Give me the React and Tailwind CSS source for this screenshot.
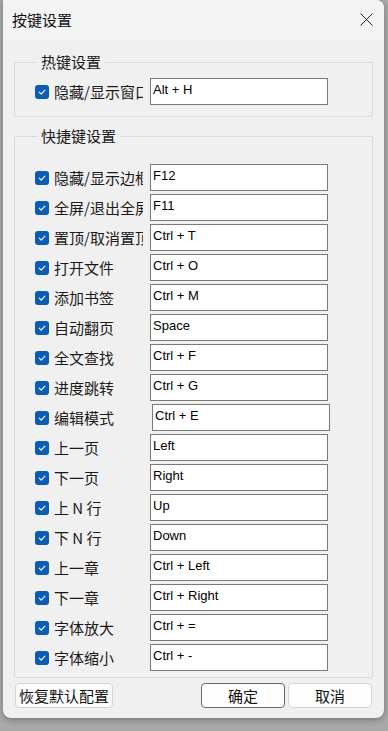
const HOTKEYS = [{ label: '隐藏/显示窗口', value: 'Alt + H' }];

const SHORTCUTS = [
    { label: '隐藏/显示边框', value: 'F12' },
    { label: '全屏/退出全屏', value: 'F11' },
    { label: '置顶/取消置顶', value: 'Ctrl + T' },
    { label: '打开文件', value: 'Ctrl + O' },
    { label: '添加书签', value: 'Ctrl + M' },
    { label: '自动翻页', value: 'Space' },
    { label: '全文查找', value: 'Ctrl + F' },
    { label: '进度跳转', value: 'Ctrl + G' },
    { label: '编辑模式', value: 'Ctrl + E', shifted: true },
    { label: '上一页', value: 'Left' },
    { label: '下一页', value: 'Right' },
    { label: '上 N 行', value: 'Up' },
    { label: '下 N 行', value: 'Down' },
    { label: '上一章', value: 'Ctrl + Left' },
    { label: '下一章', value: 'Ctrl + Right' },
    { label: '字体放大', value: 'Ctrl + =' },
    { label: '字体缩小', value: 'Ctrl + -' },
];

const CJK = "font-['Noto_Sans_CJK_SC',sans-serif]";

const Check = () => (
    <span className="flex h-[14px] w-[14px] shrink-0 items-center justify-center rounded-[3px] bg-[#0b5cb5]">
        <svg width="10" height="10" viewBox="0 0 10 10" fill="none">
            <path d="M2.2 5.2 L4.2 7.1 L7.9 3.1" stroke="white" strokeWidth="1.1" strokeLinecap="round" strokeLinejoin="round" />
        </svg>
    </span>
);

const KeyRow = ({ label, value, shifted }) => (
    <div className="flex h-[27px] items-center">
        <Check />
        <span className={`ml-[5px] w-[89px] overflow-hidden whitespace-nowrap text-[15px] leading-[20px] text-[#1a1a1a] ${CJK}`}>
            {label}
        </span>
        <div
            className={`${shifted ? 'ml-[9px]' : 'ml-[7px]'} h-[27px] w-[178px] border border-[#7a7a7a] bg-white pl-[2px] pt-[2px] font-['Liberation_Sans',sans-serif] text-[13px] leading-[17px] text-black`}
        >
            {value}
        </div>
    </div>
);

const Group = ({ title, children, className }) => (
    <fieldset className={`mx-[11px] rounded-[2px] border border-[#dadada] pl-[20px] ${className}`}>
        <legend className={`ml-[2px] px-[4px] text-[15px] leading-[20px] text-[#1a1a1a] ${CJK}`}>{title}</legend>
        {children}
    </fieldset>
);

export default function App() {
    return (
        <div className="h-[731px] w-[388px] overflow-hidden bg-[#a9a9a9] pb-[13px] pl-[3px] pr-[4px]">
            <div className="flex h-full flex-col rounded-b-[8px] rounded-tr-[8px] bg-[#f0f0f0] shadow-[0_2px_6px_rgba(0,0,0,0.3)]">
                <div className="flex h-[40px] items-center justify-between rounded-tr-[8px] bg-[#f3f3f3] pl-[9px] pr-[11px]">
                    <span className={`text-[15px] text-[#111] ${CJK}`}>按键设置</span>
                    <svg width="13" height="13" viewBox="0 0 13 13" className="mb-[1px]">
                        <path d="M0.5 0.5 L12.5 12.5 M12.5 0.5 L0.5 12.5" stroke="#222" strokeWidth="1" />
                    </svg>
                </div>

                <Group title="热键设置" className="mt-[12px] pb-[11px] pt-[6px]">
                    {HOTKEYS.map(item => (
                        <KeyRow key={item.label} {...item} />
                    ))}
                </Group>

                <Group title="快捷键设置" className="mt-[9px] pb-[6px] pt-[18px]">
                    <div className="flex flex-col gap-[3px]">
                        {SHORTCUTS.map(item => (
                            <KeyRow key={item.label} {...item} />
                        ))}
                    </div>
                </Group>

                <div className={`mx-[12px] mt-[5px] flex items-center text-[15px] text-[#111] ${CJK}`}>
                    <button className="h-[25px] w-[98px] rounded-[4px] border border-[#d4d4d4] bg-[#fdfdfd] leading-[20px]">
                        恢复默认配置
                    </button>
                    <button className="ml-auto h-[25px] w-[84px] rounded-[4px] border border-[#5b6b7e] bg-[#fdfdfd] leading-[20px]">
                        确定
                    </button>
                    <button className="ml-[3px] h-[25px] w-[84px] rounded-[4px] border border-[#d4d4d4] bg-[#fdfdfd] leading-[20px]">
                        取消
                    </button>
                </div>
            </div>
        </div>
    );
}
